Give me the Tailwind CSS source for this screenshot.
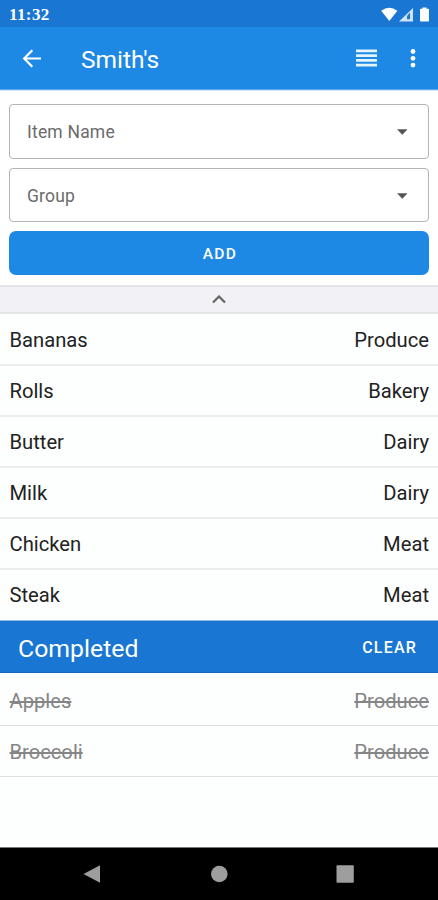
<!DOCTYPE html>
<html lang="en">
<head>
<meta charset="utf-8">
<title>Smith's</title>
<script src="https://cdn.jsdelivr.net/npm/@tailwindcss/browser@4"></script>
</head>
<body class="w-[438px] h-[900px] overflow-hidden flex flex-col bg-[#fdfefe] font-['Roboto',sans-serif] text-[#222]">
  <div class="h-[27px] shrink-0 bg-[#1976d2] flex items-center justify-between pl-[9px] pr-2 text-white">
    <span class="font-['Liberation_Serif',serif] font-bold text-[17px] leading-none tracking-[0.4px] pt-[1px]">11:32</span>
    <svg class="w-[50px] h-[15px] mt-px" viewBox="0 0 50 15" fill="currentColor">
      <path d="M1.200 3.800Q9.200-2.400 17.400 3.800L9.300 14Z"/>
      <path d="M19 14.500L33 1V14.500Z" fill-opacity=".8"/>
      <path d="M27 12.200V9L30 5.500V12.200Z" fill="#1976d2"/>
      <path d="M42.500 0.500h4v1.300h1.700q.8 0 .8.800v11.100q0 .8-.8.800h-7.400q-.8 0-.8-.8V2.600q0-.8.800-.8h1.700z"/>
    </svg>
  </div>
  <header class="h-[63px] shrink-0 bg-[#1e88e5] border-b border-[#5aa7ec] flex items-center text-white pl-[22px] pr-[22px]">
    <svg class="w-5 h-5" viewBox="0 0 20 20" fill="none" stroke="currentColor" stroke-width="2.200"><path d="M19 10.500H2.500M10.300 2.300L2.200 10.500l8.100 8.200"/></svg>
    <h1 class="text-[24.500px] leading-none ml-[39px] mt-[5px]">Smith's</h1>
    <svg class="w-[21px] h-[18px] ml-auto" viewBox="0 0 21 18" fill="#e3f6ff"><path d="M0 .5h21v2.700H0zM0 5.300h21V8H0zM0 10.100h21v2.700H0zM0 14.800h21v2.700H0z"/></svg>
    <svg class="w-[6px] h-[20px] ml-[33px]" viewBox="0 0 6 20" fill="currentColor"><circle cx="3" cy="3.500" r="2.400"/><circle cx="3" cy="10.300" r="2.400"/><circle cx="3" cy="17.100" r="2.400"/></svg>
  </header>
  <section class="h-[195px] shrink-0 border-t border-[#d3e9fc] bg-white px-[9px] pt-[13px] flex flex-col text-[#6b6b6b]">
    <div class="h-[55px] border-[1.500px] border-[#b4b4b4] rounded-[4px] flex items-center justify-between pl-[17px] pr-[20px]">
      <span class="text-[17.500px] tracking-[0.200px] pt-px">Item Name</span>
      <svg class="w-[12px] h-[6px]" viewBox="0 0 12 6" fill="#555"><path d="M1 .3h10.500L6.300 5.800z"/></svg>
    </div>
    <div class="h-[54px] mt-[9px] border-[1.500px] border-[#b4b4b4] rounded-[4px] flex items-center justify-between pl-[17px] pr-[20px]">
      <span class="text-[17.500px] tracking-[0.200px] pt-[2px]">Group</span>
      <svg class="w-[12px] h-[6px] mt-[2px]" viewBox="0 0 12 6" fill="#555"><path d="M1 .3h10.500L6.300 5.800z"/></svg>
    </div>
    <button class="h-[44px] mt-[9px] pt-[3px] pl-[2px] bg-[#1e88e5] rounded-[7px] text-white font-medium text-[15.500px] tracking-[1.300px]">ADD</button>
  </section>
  <div class="h-[29px] shrink-0 bg-[#f2f1f6] border-y-2 border-[#e4e4e6] flex items-center justify-center">
    <svg class="w-[14px] h-[9px]" viewBox="0 0 14 9" fill="none" stroke="#666" stroke-width="2.200"><path d="M1 7.500l6-6 6 6"/></svg>
  </div>
  <ul class="shrink-0 text-[20.200px] leading-none">
    <li class="h-[52px] border-b-2 border-[#eaecee] pl-[9.500px] pr-[9px] pt-[3px] flex items-center justify-between"><span>Bananas</span><span>Produce</span></li>
    <li class="h-[51px] border-b-2 border-[#eaecee] pl-[9.500px] pr-[9px] pt-[2px] flex items-center justify-between"><span>Rolls</span><span>Bakery</span></li>
    <li class="h-[51px] border-b-2 border-[#eaecee] pl-[9.500px] pr-[9px] pt-[2px] flex items-center justify-between"><span>Butter</span><span>Dairy</span></li>
    <li class="h-[51px] border-b-2 border-[#eaecee] pl-[9.500px] pr-[9px] pt-[2px] flex items-center justify-between"><span>Milk</span><span>Dairy</span></li>
    <li class="h-[51px] border-b-2 border-[#eaecee] pl-[9.500px] pr-[9px] pt-[2px] flex items-center justify-between"><span>Chicken</span><span>Meat</span></li>
    <li class="h-[51px] border-b border-[#8ebbe9] pl-[9.500px] pr-[9px] pt-px flex items-center justify-between"><span>Steak</span><span>Meat</span></li>
  </ul>
  <div class="h-[52px] shrink-0 bg-[#1976d2] border-b border-[#1567bd] flex items-center justify-between pl-[18px] pr-[21px] text-white">
    <h2 class="text-[24.800px] leading-none mt-[5px]">Completed</h2>
    <button class="font-medium text-[16px] tracking-[1.200px] pt-[3px]">CLEAR</button>
  </div>
  <ul class="grow text-[20.200px] leading-none text-[#858585]">
    <li class="h-[53px] border-b border-[#dcdee0] pl-[9.500px] pr-[9px] pt-[4px] flex items-center justify-between line-through decoration-[1.500px]"><span>Apples</span><span>Produce</span></li>
    <li class="h-[51px] border-b border-[#dcdee0] pl-[9.500px] pr-[9px] pt-[2px] flex items-center justify-between line-through decoration-[1.500px]"><span>Broccoli</span><span>Produce</span></li>
  </ul>
  <nav class="h-[53px] shrink-0 bg-black border-t border-[#777] flex items-center justify-between pl-[83px] pr-[84px] text-[#9e9e9e]">
    <svg class="w-[18px] h-[18px]" viewBox="0 0 18 18" fill="currentColor"><path d="M.5 9L17 .3v17.400z"/></svg>
    <svg class="w-[18px] h-[18px]" viewBox="0 0 18 18" fill="currentColor"><circle cx="9.300" cy="9" r="8.300"/></svg>
    <svg class="w-[18px] h-[18px]" viewBox="0 0 18 18" fill="currentColor"><rect x=".5" y=".3" width="17.300" height="17.500" rx="1"/></svg>
  </nav>
</body>
</html>
